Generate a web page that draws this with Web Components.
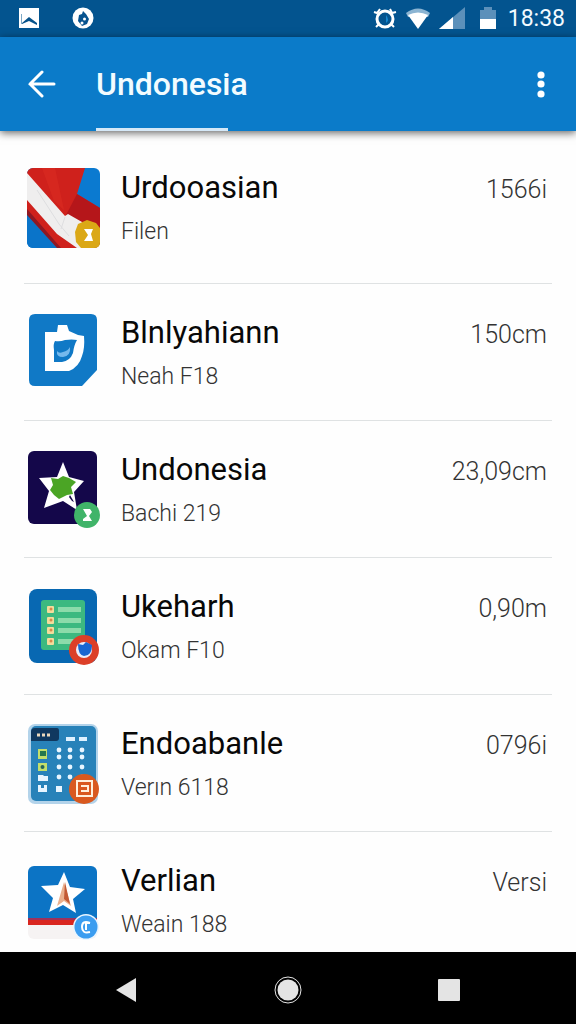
<!DOCTYPE html>
<html lang="id">

<head>
    <meta charset="UTF-8">
    <meta name="viewport" content="width=device-width, initial-scale=1.0">
    <title>Undonesia</title>
    <style>
        body {
            margin: 0;
            font-family: Roboto, "Noto Sans", sans-serif;
            background: #fefefe;
        }
    </style>
</head>

<body>
    <phone-screen>
        <status-bar slot="top" time="18:38"></status-bar>
        <app-bar slot="top">Undonesia</app-bar>
        <file-row icon="flag" value="1566i" class="first">Urdooasian<span slot="detail">Filen</span></file-row>
        <file-row icon="disk" value="150cm">Blnlyahiann<span slot="detail">Neah F18</span></file-row>
        <file-row icon="flower" value="23,09cm">Undonesia<span slot="detail">Bachi 219</span></file-row>
        <file-row icon="sheet" value="0,90m">Ukeharh<span slot="detail">Okam F10</span></file-row>
        <file-row icon="panel" value="0796i">Endoabanle<span slot="detail">Verın 6118</span></file-row>
        <file-row icon="star" value="Versi">Verlian<span slot="detail">Weain 188</span></file-row>
        <nav-bar slot="bottom"></nav-bar>
    </phone-screen>
    <script>
        const icons = {
            flag: `
              <clipPath id="c"><rect x="3" y="3" width="73" height="80" rx="6"/></clipPath>
              <g clip-path="url(#c)">
                <path fill="#0b7ad0" d="M0 0h80v84H0z"/>
                <path fill="#cf211c" d="M3 3h58l-8 26 23 14v41H33L3 48z"/>
                <path fill="#b5161a" d="M53 29l23 14v22L42 50z"/>
                <path fill="#e03326" d="M18 3h13l9 42-10-9z" opacity=".4"/>
                <path fill="#0a74c9" d="M3 46l31 37H3z"/>
                <path fill="#8f1823" d="M3 44l34 39h-4L3 50z"/>
                <path fill="#efeeee" d="M3 8l38 43 3-2 14 8 4 26h-9L33 69 3 35z"/>
                <path fill="none" stroke="#dedee0" stroke-width="1" d="M13 25l22 34 10 12M41 52l-4 12"/>
              </g>
              <path fill="#dba816" d="M63 55l9 3 4 5v14q0 6-6 6H57l-5-6-1-10 3-8z"/>
              <path fill="#fff" d="M60 64h9l-2 5 2 7h-9l4-6z"/>`,
            disk: `
              <path fill="#1079c6" d="M11 4h56q6 0 6 6v50L58 76H11q-6 0-6-6V10q0-6 6-6z"/>
              <path fill="#fff" fill-rule="evenodd" d="M21 22h12l1-7h9l2 6 9 4 6 1q1 12-2 20-3 11-13 15H21zM31 31q-2 3-1 9v12h8q8-1 11-9 1-8 4-13-5-1-12 0-5 2-10 1z"/>
              <path fill="#75b9ed" d="M46 37q1 9-7 10-7 0-6-6 2 3 6 1 5-1 7-5z"/>`,
            flower: `
              <rect x="4" y="4" width="69" height="73" rx="6" fill="#14074a"/>
              <path fill="#fff" d="M39 15l6 15 15 4-10 11 3 18-14-9-19 7 5-17-10-13 18-1z"/>
              <path fill="#4ba525" d="M27 31l7 1 5-3 6 2 7 4-5 5 2 7-6 1-8 4-5-4-4-5 3-5z"/>
              <path fill="#14074a" d="M46 48l4 7-2-1-3-4z"/>
              <circle cx="63" cy="68" r="13" fill="#40b469"/>
              <path fill="#fff" d="M59 62h7l2 3-3 4 3 5h-9v-2l4-3z"/>`,
            sheet: `
              <rect x="5" y="5" width="68" height="74" rx="8" fill="#0868b2"/>
              <rect x="17" y="16" width="44" height="50" rx="3" fill="#3cb980"/>
              ${[25, 36, 46, 57].map(y => `
                <rect x="23" y="${y - 3}" width="7" height="7" rx="1" fill="#f3dc9b"/>
                <circle cx="27" cy="${y}" r="1.5" fill="#d98a4c"/>
                <rect x="34" y="${y - 2}" width="23" height="5" fill="#8cdbaa"/>
              `).join('')}
              <circle cx="60" cy="66" r="15" fill="#dc3f28"/>
              <circle cx="60" cy="66" r="8" fill="#e9eefc"/>
              <path fill="#1866d2" d="M54 60l5 1 3-3 6 3q0 11-8 11-6-1-6-12z"/>`,
            panel: `
              <rect x="4" y="3" width="70" height="80" rx="7" fill="#b3d3ea"/>
              <rect x="7" y="5" width="65" height="75" rx="5" fill="#2882b9"/>
              <path fill="#10385f" d="M11 7h22q2 0 2 3v7q0 3-3 3H7v-9q0-4 4-4z"/>
              <path stroke="#ecd9bd" stroke-width="3" stroke-dasharray="3 2" d="M13 14h13"/>
              <path fill="#def1ff" d="M42 16h9v4h-9zM55 16h8v4h-8z"/>
              ${[29, 36, 46, 56].map(y => [35, 46, 58].map(x => `
                <circle cx="${x}" cy="${y}" r="2.4" fill="#e8f5ff"/>
              `).join('')).join('')}
              <path fill="#e8f5ff" d="M32 65h6v6h-6zM14 54h5l1 1h4v5H14zM14 64h9v7h-9z"/>
              <path fill="#c3df6b" d="M14 28h9v10h-9zM14 42h9v8h-9z"/>
              <path fill="#26784e" d="M16 30h6v5h-6z"/>
              <circle cx="18.5" cy="46" r="2" fill="#25665a"/>
              <path fill="#2882b9" d="M17 64h3v3h-3z"/>
              <circle cx="60" cy="68" r="15" fill="#d9591f"/>
              <path fill="none" stroke="#fff0dc" stroke-width="2" d="M53 60h15v15H53zM57 65h7v5h-7"/>`,
            star: `
              <clipPath id="c"><rect x="4" y="8" width="69" height="73" rx="6"/></clipPath>
              <g clip-path="url(#c)">
                <path fill="#f6f3f3" d="M0 0h80v84H0z"/>
                <path fill="#0c74c5" d="M0 0h80v60H0z"/>
                <path fill="#d9261f" d="M0 60h80v7H0z"/>
                <path fill="#9d315b" d="M0 60h80v2H0z"/>
              </g>
              <path fill="#fff" d="M40 14l6 15 15 2-12 10 3 14-13-8-14 7 4-14-12-12 17-1z"/>
              <path fill="#eab08e" d="M40 24l7 24-7-5-7 5z"/>
              <path fill="#c35a35" d="M41 24l5 22-6-5z"/>
              <circle cx="62" cy="69" r="13" fill="#e9f5ff"/>
              <circle cx="62" cy="69" r="11.5" fill="#3b9df0"/>
              <path fill="none" stroke="#fff" stroke-width="2" d="M66 65q-8-3-8 4t8 5M66 65h-4v7"/>`
        };

        customElements.define('phone-screen', class extends HTMLElement {
            constructor() {
                super().attachShadow({ mode: 'open' }).innerHTML = `
          <style>
            :host {
              display: flex;
              flex-direction: column;
              height: 100vh;
            }
            main {
              flex: 1;
              min-height: 0;
              overflow: hidden;
              padding: 0 24px;
            }
          </style>
          <slot name="top"></slot>
          <main><slot></slot></main>
          <slot name="bottom"></slot>`;
            }
        });

        customElements.define('status-bar', class extends HTMLElement {
            constructor() {
                super().attachShadow({ mode: 'open' }).innerHTML = `
          <style>
            :host {
              display: flex;
              justify-content: space-between;
              align-items: center;
              height: 37px;
              padding: 0 11px 0 19px;
              box-sizing: border-box;
              background: #03548f;
              color: #f2faff;
            }
            div {
              display: flex;
              align-items: center;
              gap: 8px;
            }
            .left {
              gap: 33px;
            }
            svg {
              display: block;
            }
            time {
              font-size: 23px;
              line-height: 36px;
            }
          </style>
          <div class="left">
            <svg width="20" height="24" viewBox="0 0 20 24">
              <path fill="#fff" d="M0 1h20v20H0z"/>
              <path fill="#06528a" d="M3 16l7-6 8 6v2l-8-4-7 3z"/>
              <path fill="#7ea9c6" d="M2 7h1v10H2z"/>
            </svg>
            <svg width="22" height="24" viewBox="0 0 22 24">
              <circle cx="11" cy="11" r="10.5" fill="#fff"/>
              <path fill="#07538f" d="M11 4l3 3 3 5-2 5-5 2-4-5 1-6 3-1z"/>
              <circle cx="12.5" cy="12" r="1.5" fill="#fff"/>
              <circle cx="10" cy="16" r="1.5" fill="#fff"/>
            </svg>
          </div>
          <div>
            <svg width="24" height="24" viewBox="0 0 24 24" fill="none" stroke="#fff">
              <circle cx="12" cy="12" r="8" stroke-width="3"/>
              <path stroke-width="2" d="M1 5l3 1 3-4M17 2l2 4 4-1M6 17l-3 3M18 17l3 3"/>
              <path fill="#1687cf" stroke="none" d="M13 8q4 5 0 8z"/>
            </svg>
            <svg width="26" height="24" viewBox="0 0 26 24">
              <path fill="#8bb4d2" d="M1 6q12-9 24 0l-2 4H3z"/>
              <path fill="#fff" d="M3 8q10-5 20 0L13 22z"/>
            </svg>
            <svg width="26" height="24" viewBox="0 0 26 24">
              <path fill="#5c90ba" d="M0 22L26 0v22z"/>
              <path fill="#fff" d="M0 22l14-12v12z"/>
            </svg>
            <svg width="27" height="24" viewBox="0 0 27 24">
              <path fill="#5c90ba" d="M7 3h4V0h8v3h4v9H7z"/>
              <path fill="#fff" d="M7 12h16v10H7z"/>
            </svg>
            <time>${this.getAttribute('time')}</time>
          </div>`;
            }
        });

        customElements.define('app-bar', class extends HTMLElement {
            constructor() {
                super().attachShadow({ mode: 'open' }).innerHTML = `
          <style>
            :host {
              display: flex;
              height: 94px;
              background: #0b7bc9;
              color: #f2fcff;
              box-shadow: 0 2px 8px rgba(0, 0, 0, .6);
            }
            button {
              display: grid;
              place-items: center;
              padding: 0;
              border: none;
              background: none;
              cursor: pointer;
            }
            .back {
              width: 84px;
            }
            .more {
              width: 70px;
            }
            .title {
              flex: 1;
              display: flex;
              flex-direction: column;
              padding: 3px 0 0 12px;
            }
            h1 {
              margin: auto 0;
              font-size: 32px;
              line-height: 36px;
              font-weight: 500;
            }
            .tab {
              width: 132px;
              height: 3px;
              background: #d5e8f7;
            }
          </style>
          <button class="back" aria-label="Back">
            <svg width="28" height="28" viewBox="0 0 28 28" fill="none" stroke="#fff" stroke-width="3" stroke-linecap="round">
              <path d="M14 2L2 14l12 12M2 14h24"/>
            </svg>
          </button>
          <div class="title">
            <h1><slot></slot></h1>
            <div class="tab"></div>
          </div>
          <button class="more" aria-label="More">
            <svg width="8" height="28" viewBox="0 0 8 28" fill="#fff">
              <circle cx="4" cy="5" r="3.6"/>
              <circle cx="4" cy="14" r="3.6"/>
              <circle cx="4" cy="24" r="3.6"/>
            </svg>
          </button>`;
            }
        });

        customElements.define('file-row', class extends HTMLElement {
            constructor() {
                super().attachShadow({ mode: 'open' }).innerHTML = `
          <style>
            :host {
              display: flex;
              align-items: center;
              gap: 17px;
              height: 136px;
              padding-right: 5px;
              border-bottom: 1px solid #dfe2e3;
            }
            :host(.first) {
              padding-top: 8px;
              padding-bottom: 8px;
            }
            svg {
              flex: none;
            }
            .text {
              flex: 1;
            }
            .head {
              display: flex;
              justify-content: space-between;
              align-items: baseline;
              margin-bottom: 14px;
            }
            h2 {
              margin: 0;
              font-size: 31px;
              line-height: 36px;
              font-weight: 400;
              color: #080808;
            }
            .value {
              font-size: 25px;
              line-height: 28px;
              font-weight: 300;
              color: #333;
            }
            .detail {
              font-size: 23px;
              line-height: 24px;
              font-weight: 300;
              color: #333;
            }
          </style>
          <svg width="80" height="84" viewBox="0 0 80 84">${icons[this.getAttribute('icon')]}</svg>
          <div class="text">
            <div class="head">
              <h2><slot></slot></h2>
              <span class="value">${this.getAttribute('value')}</span>
            </div>
            <div class="detail"><slot name="detail"></slot></div>
          </div>`;
            }
        });

        customElements.define('nav-bar', class extends HTMLElement {
            constructor() {
                super().attachShadow({ mode: 'open' }).innerHTML = `
          <style>
            :host {
              display: grid;
              grid-template-columns: repeat(3, 1fr);
              height: 72px;
              padding: 4px 45px 0;
              box-sizing: border-box;
              background: #000;
            }
            button {
              display: grid;
              place-items: center;
              padding: 0;
              border: none;
              background: none;
              cursor: pointer;
            }
          </style>
          ${[
            ['Back', '<path d="M4 14L24 2v24z"/>'],
            ['Home', '<circle cx="14" cy="14" r="10.5"/><circle cx="14" cy="14" r="13" fill="none" stroke="#e4e4e4"/>'],
            ['Recent', '<rect x="2" y="3" width="22" height="22" rx="1"/>']
          ].map(([label, shape]) => `
            <button aria-label="${label}">
              <svg width="28" height="28" viewBox="0 0 28 28" fill="#e4e4e4">${shape}</svg>
            </button>
          `).join('')}`;
            }
        });
    </script>
</body>

</html>
